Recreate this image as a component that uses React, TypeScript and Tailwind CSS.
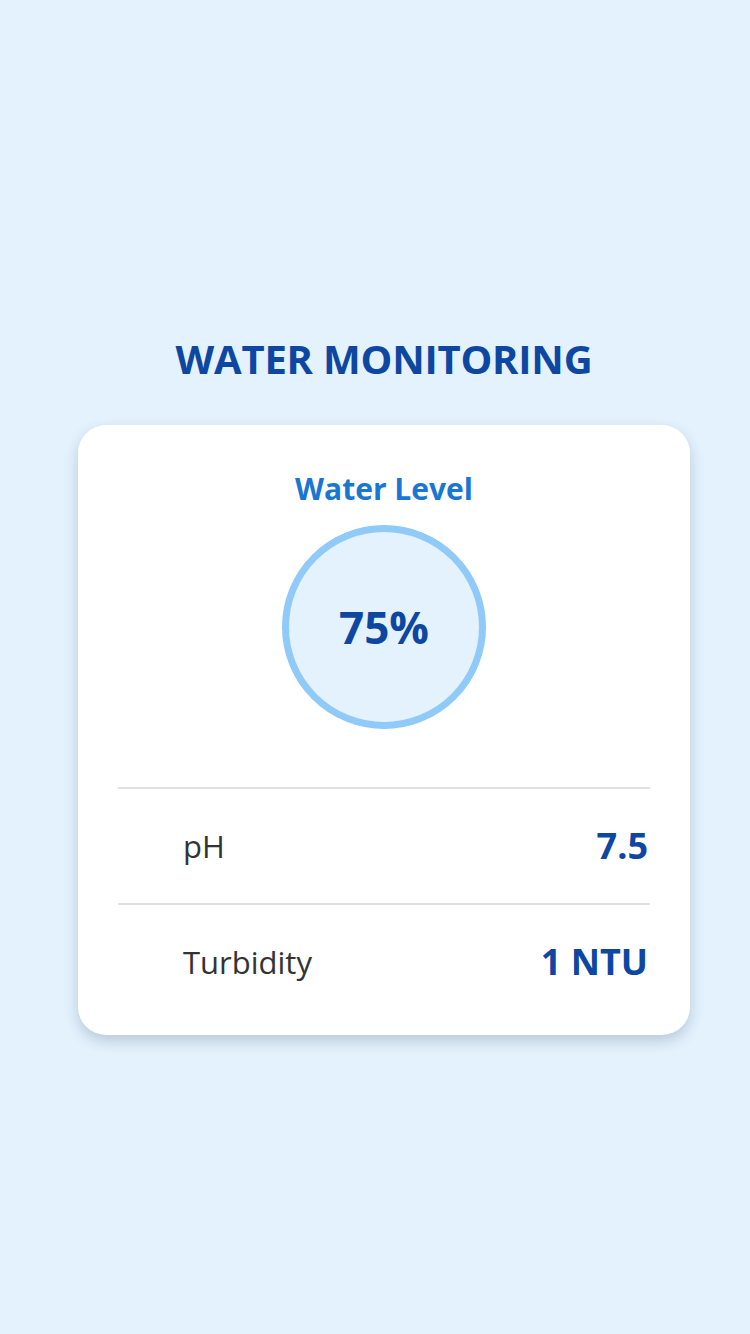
import React from "react";

const FONT = { fontFamily: '"Open Sans", "Noto Sans", sans-serif' };

function Row({ label, value }: { label: string; value: string }) {
  return (
    <div className="flex items-center justify-between border-t-2 border-[#e0e0e0] h-[116px]">
      <span className="pl-[65px] text-[31px] text-[#333333]">{label}</span>
      <span className="text-[36px] font-bold text-[#0d47a1] pr-[2px]">{value}</span>
    </div>
  );
}

export default function App() {
  return (
    <div style={FONT} className="min-h-screen w-full bg-[#e3f2fd] flex flex-col items-center pt-[330px] pl-[18px]">
      <h1 className="text-[40px] leading-[58px] font-bold text-[#0d47a1] tracking-[-0.2px]">WATER MONITORING</h1>
      <div className="mt-[37px] w-[612px] bg-white rounded-[28px] shadow-[0_6px_14px_rgba(40,60,90,0.22)] pt-[40px] px-[40px] pb-[16px]">
        <h2 className="text-center text-[30px] leading-[48px] font-bold text-[#1976d2]">Water Level</h2>
        <div className="mt-[12px] flex justify-center">
          <div className="w-[204px] h-[204px] rounded-full border-[7px] border-[#90caf9] bg-[#e3f2fd] flex items-center justify-center">
            <span className="text-[44px] font-bold text-[#0d47a1]">75%</span>
          </div>
        </div>
        <div className="mt-[58px]">
          <Row label="pH" value="7.5" />
          <Row label="Turbidity" value="1 NTU" />
        </div>
      </div>
    </div>
  );
}
